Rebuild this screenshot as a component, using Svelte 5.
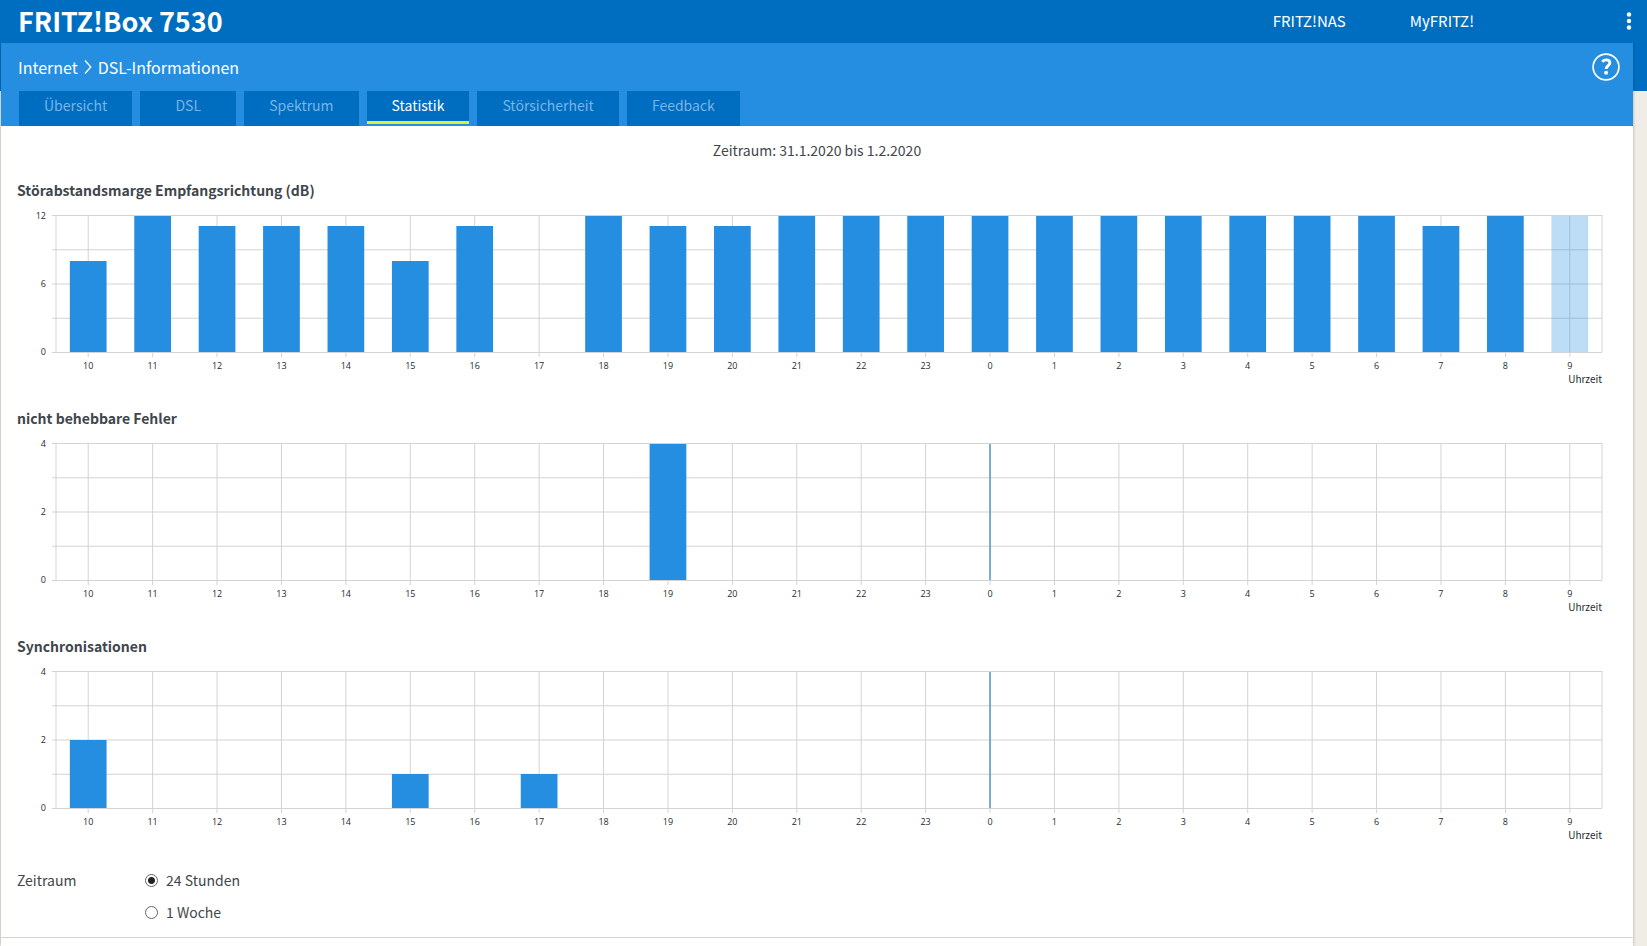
<script lang="ts">
	// DSL statistics page: three hourly bar charts over the last 24 hours,
	// plus the switch between day and week.
	interface Chart {
		title: string;
		max: number;
		/** One value per hour, in the order of HOURS. */
		values: number[];
		/** The running hour is drawn lighter. */
		pending?: number;
	}

	const HOURS = [
		10, 11, 12, 13, 14, 15, 16, 17, 18, 19, 20, 21, 22, 23, 0, 1, 2, 3, 4, 5, 6, 7, 8, 9
	];
	const PLOT_HEIGHT = 137;
	const SLOT = 100 / HOURS.length;
	const BAR = SLOT * 0.57;
	const MIDNIGHT = HOURS.indexOf(0);

	const tabs = ['Übersicht', 'DSL', 'Spektrum', 'Statistik', 'Störsicherheit', 'Feedback'];
	const activeTab = 'Statistik';

	const charts: Chart[] = [
		{
			title: 'Störabstandsmarge Empfangsrichtung (dB)',
			max: 12,
			values: [
				8, 12, 11, 11, 11, 8, 11, 0, 12, 11, 11, 12, 12, 12, 12, 12, 12, 12, 12, 12, 12, 11, 12, 12
			],
			pending: 23
		},
		{
			title: 'nicht behebbare Fehler',
			max: 4,
			values: HOURS.map((h) => (h === 19 ? 4 : 0))
		},
		{
			title: 'Synchronisationen',
			max: 4,
			values: HOURS.map((h) => (h === 10 ? 2 : h === 15 || h === 17 ? 1 : 0))
		}
	];

	const periods = [
		{ value: 'day', label: '24 Stunden' },
		{ value: 'week', label: '1 Woche' }
	];
	let period = $state('day');

	const center = (i: number) => (i + 0.5) * SLOT;
	// full bars stop just below the top grid line
	const barTop = (value: number, max: number) =>
		Math.max(1, Math.round((1 - value / max) * PLOT_HEIGHT));
</script>

<div class="shell">
	<header class="top">
		<h1 class="top__title">FRITZ!Box 7530</h1>
		<nav class="top__nav">
			<a href="#nas">FRITZ!NAS</a>
			<a href="#myfritz">MyFRITZ!</a>
		</nav>
		<button class="top__menu" type="button" aria-label="Menü">
			<svg width="6" height="20" viewBox="0 0 6 20" fill="#fff" aria-hidden="true">
				<circle cx="3" cy="3.5" r="2.2" />
				<circle cx="3" cy="10" r="2.2" />
				<circle cx="3" cy="16.5" r="2.2" />
			</svg>
		</button>
	</header>

	<main class="page">
		<div class="head">
			<div class="head__row">
				<div class="crumbs">
					<span>Internet</span>
					<svg width="8" height="16" viewBox="0 0 8 16" fill="none" stroke="#fff" aria-hidden="true">
						<path d="M1 1.5 6.8 8 1 14.5" stroke-width="1.3" />
					</svg>
					<span>DSL-Informationen</span>
				</div>
				<button class="help" type="button" aria-label="Hilfe">
					<svg width="28" height="28" viewBox="0 0 28 28" fill="none" stroke="#fff" aria-hidden="true">
						<circle cx="14" cy="14" r="12.9" stroke-width="1.7" />
						<path
							d="M10.3 8.8c1-1.3 2.3-1.9 3.9-1.9 2.2 0 3.7 1.1 3.7 2.9 0 2.7-3.7 3.1-3.7 6.2"
							stroke-width="2.8"
						/>
						<circle cx="14.1" cy="19.7" r="2" fill="#fff" stroke="none" />
					</svg>
				</button>
			</div>
			<nav class="tabs">
				{#each tabs as tab (tab)}
					<a
						class="tabs__tab"
						class:tabs__tab--active={tab === activeTab}
						href="#{tab}"
						aria-current={tab === activeTab ? 'page' : undefined}>{tab}</a
					>
				{/each}
			</nav>
		</div>

		<p class="range">Zeitraum: 31.1.2020 bis 1.2.2020</p>

		{#each charts as chart (chart.title)}
			<section class="chart">
				<h2 class="chart__title">{chart.title}</h2>
				<div class="chart__body">
					<div class="chart__scale">
						<span>{chart.max}</span>
						<span>{chart.max / 2}</span>
						<span>0</span>
					</div>
					<svg class="chart__plot" width="100%" height={PLOT_HEIGHT} role="img" aria-label={chart.title}>
						<g class="grid">
							<line x1="0" x2="0" y1="0" y2={PLOT_HEIGHT} />
							{#each HOURS as hour, i (hour)}
								<line x1="{center(i)}%" x2="{center(i)}%" y1="0" y2={PLOT_HEIGHT + 5} />
							{/each}
							<line x1="100%" x2="100%" y1="0" y2={PLOT_HEIGHT} />
							{#each [0, 1, 2, 3, 4] as row (row)}
								<line
									x1="-4"
									x2="100%"
									y1={(row * PLOT_HEIGHT) / 4 + 0.5}
									y2={(row * PLOT_HEIGHT) / 4 + 0.5}
								/>
							{/each}
						</g>
						<line
							class="midnight"
							x1="{center(MIDNIGHT)}%"
							x2="{center(MIDNIGHT)}%"
							y1="1"
							y2={PLOT_HEIGHT}
						/>
						{#each chart.values as value, i (i)}
							{#if value > 0}
								<rect
									class="bar"
									class:bar--pending={i === chart.pending}
									x="{center(i) - BAR / 2}%"
									y={barTop(value, chart.max)}
									width="{BAR}%"
									height={PLOT_HEIGHT - barTop(value, chart.max)}
								/>
							{/if}
						{/each}
					</svg>
					<div class="chart__hours">
						{#each HOURS as hour (hour)}
							<span>{hour}</span>
						{/each}
					</div>
					<div class="chart__unit">Uhrzeit</div>
				</div>
			</section>
		{/each}

		<fieldset class="period">
			<legend class="period__legend">Zeitraum</legend>
			<div class="period__options">
				{#each periods as p (p.value)}
					<label class="period__option">
						<input type="radio" name="period" value={p.value} bind:group={period} />
						{p.label}
					</label>
				{/each}
			</div>
		</fieldset>
	</main>
</div>

<style>
	:global(body) {
		margin: 0;
		background: #f0ede6;
	}

	.shell {
		display: flex;
		flex-direction: column;
		min-height: 100vh;
		background: linear-gradient(#006ec0 91px, #f0ede6 91px);
		font-family: 'Noto Sans CJK SC', 'Noto Sans', sans-serif;
		font-size: 14px;
		line-height: 20px;
		color: #3f464c;
	}

	.top {
		box-sizing: border-box;
		display: flex;
		align-items: center;
		height: 43px;
		padding: 0 15px 2px 18px;
		color: #fff;
	}

	.top__title {
		flex: 1;
		margin: 0;
		font-size: 27px;
		line-height: 40px;
		font-weight: 700;
	}

	.top__nav {
		display: flex;
		gap: 64px;
		margin-right: 152px;
		font-size: 15px;
	}

	.top__nav a {
		color: #fff;
		text-decoration: none;
	}

	.top__menu,
	.help {
		display: flex;
		padding: 0;
		border: 0;
		background: none;
		cursor: pointer;
	}

	.page {
		flex: 1;
		box-sizing: border-box;
		margin: 0 14px 0 1px;
		background: #fff;
		box-shadow: 0 0 3px rgba(0, 0, 0, 0.3);
		clip-path: inset(0 -4px 0 -1px);
	}

	.head {
		padding: 0 13px 0 17px;
		background: #268ee0;
	}

	.head__row {
		display: flex;
		justify-content: space-between;
		align-items: center;
		height: 48px;
	}

	.crumbs {
		display: flex;
		align-items: center;
		gap: 6px;
		font-size: 16px;
		color: #fff;
	}

	.tabs {
		display: flex;
		gap: 8px;
		padding-left: 1px;
	}

	.tabs__tab {
		box-sizing: border-box;
		min-width: 96px;
		height: 35px;
		padding: 4px 25px;
		background: #006ec0;
		color: #78b5e9;
		text-align: center;
		text-decoration: none;
	}

	.tabs__tab--active {
		height: 33px;
		border-bottom: 3px solid #e6eb35;
		color: #fff;
	}

	.range {
		margin: 14px 0 20px;
		text-align: center;
	}

	.chart {
		height: 228px;
		padding: 0 31px 0 16px;
	}

	.chart__title {
		margin: 0 0 15px;
		font-size: 14px;
		line-height: 20px;
		font-weight: 700;
	}

	.chart__body {
		display: grid;
		grid-template-columns: 29px 1fr;
		column-gap: 10px;
		font-family: 'Open Sans', sans-serif;
		font-size: 9px;
		line-height: 10px;
		color: #262b30;
	}

	.chart__scale {
		display: flex;
		flex-direction: column;
		justify-content: space-between;
		margin: -4px 0 -5px;
		text-align: right;
	}

	.chart__plot {
		display: block;
		overflow: visible;
	}

	.grid line {
		stroke: #d3d3d3;
	}

	.midnight {
		stroke: #7aabcf;
		stroke-width: 2px;
	}

	.bar {
		fill: #268ee0;
	}

	.bar--pending {
		fill-opacity: 0.3;
	}

	.chart__hours {
		grid-column: 2;
		display: grid;
		grid-template-columns: repeat(24, 1fr);
		margin-top: 9px;
		text-align: center;
	}

	.chart__unit {
		grid-column: 2;
		font-family: 'Noto Sans CJK SC', 'Noto Sans', sans-serif;
		font-size: 10px;
		line-height: 16px;
		text-align: right;
	}

	.period {
		display: flex;
		min-width: 0;
		margin: 0;
		padding: 6px 16px 15px;
		border: 0;
		border-bottom: 1px solid #d3d3d3;
	}

	.period__legend {
		float: left;
		width: 128px;
		padding: 0;
	}

	.period__options {
		display: flex;
		flex-direction: column;
		gap: 12px;
	}

	.period__option {
		display: flex;
		align-items: center;
		gap: 8px;
	}

	.period__option input {
		appearance: none;
		box-sizing: border-box;
		width: 13px;
		height: 13px;
		margin: 0;
		border: 1px solid #666;
		border-radius: 50%;
		background: #fff;
	}

	.period__option input:checked {
		background: radial-gradient(circle, #222 3px, #fff 4px);
	}
</style>
